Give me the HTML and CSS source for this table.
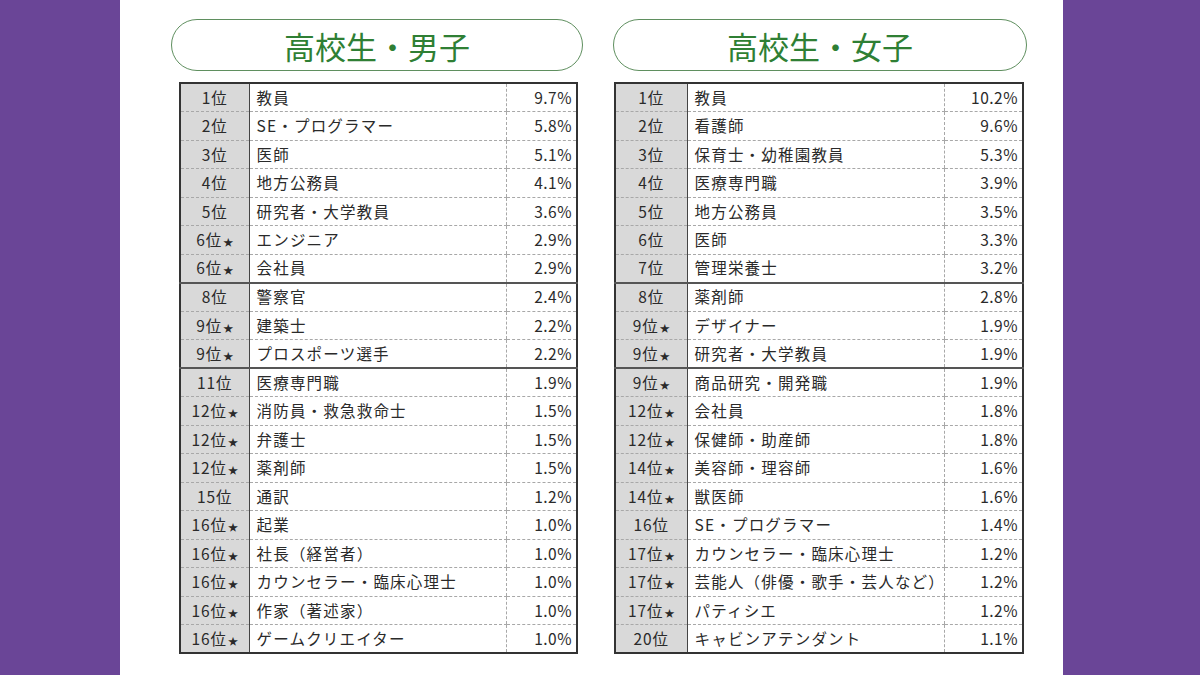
FILE: index.html
```html
<!DOCTYPE html>
<html lang="ja">
<head>
<meta charset="utf-8">
<title>高校生 なりたい職業ランキング</title>
<link rel="stylesheet" href="styles.css">
</head>
<body>
<div class="frame">
  <div class="side side-left"></div>
  <main class="sheet">
    <section class="col col-boys">
      <h2 class="pill">高校生・男子</h2>
      <table class="rank-table">
        <colgroup><col class="c-rank"><col class="c-name"><col class="c-pct"></colgroup>
        <tbody>
          <tr><td class="rank">1位</td><td class="name">教員</td><td class="pct">9.7%</td></tr>
          <tr><td class="rank">2位</td><td class="name">SE・プログラマー</td><td class="pct">5.8%</td></tr>
          <tr><td class="rank">3位</td><td class="name">医師</td><td class="pct">5.1%</td></tr>
          <tr><td class="rank">4位</td><td class="name">地方公務員</td><td class="pct">4.1%</td></tr>
          <tr><td class="rank">5位</td><td class="name">研究者・大学教員</td><td class="pct">3.6%</td></tr>
          <tr><td class="rank">6位<span class="star">★</span></td><td class="name">エンジニア</td><td class="pct">2.9%</td></tr>
          <tr class="group-end"><td class="rank">6位<span class="star">★</span></td><td class="name">会社員</td><td class="pct">2.9%</td></tr>
          <tr><td class="rank">8位</td><td class="name">警察官</td><td class="pct">2.4%</td></tr>
          <tr><td class="rank">9位<span class="star">★</span></td><td class="name">建築士</td><td class="pct">2.2%</td></tr>
          <tr class="group-end"><td class="rank">9位<span class="star">★</span></td><td class="name">プロスポーツ選手</td><td class="pct">2.2%</td></tr>
          <tr><td class="rank">11位</td><td class="name">医療専門職</td><td class="pct">1.9%</td></tr>
          <tr><td class="rank">12位<span class="star">★</span></td><td class="name">消防員・救急救命士</td><td class="pct">1.5%</td></tr>
          <tr><td class="rank">12位<span class="star">★</span></td><td class="name">弁護士</td><td class="pct">1.5%</td></tr>
          <tr><td class="rank">12位<span class="star">★</span></td><td class="name">薬剤師</td><td class="pct">1.5%</td></tr>
          <tr><td class="rank">15位</td><td class="name">通訳</td><td class="pct">1.2%</td></tr>
          <tr><td class="rank">16位<span class="star">★</span></td><td class="name">起業</td><td class="pct">1.0%</td></tr>
          <tr><td class="rank">16位<span class="star">★</span></td><td class="name">社長（経営者）</td><td class="pct">1.0%</td></tr>
          <tr><td class="rank">16位<span class="star">★</span></td><td class="name">カウンセラー・臨床心理士</td><td class="pct">1.0%</td></tr>
          <tr><td class="rank">16位<span class="star">★</span></td><td class="name">作家（著述家）</td><td class="pct">1.0%</td></tr>
          <tr><td class="rank">16位<span class="star">★</span></td><td class="name">ゲームクリエイター</td><td class="pct">1.0%</td></tr>
        </tbody>
      </table>
    </section>
    <section class="col col-girls">
      <h2 class="pill">高校生・女子</h2>
      <table class="rank-table">
        <colgroup><col class="c-rank"><col class="c-name"><col class="c-pct"></colgroup>
        <tbody>
          <tr><td class="rank">1位</td><td class="name">教員</td><td class="pct">10.2%</td></tr>
          <tr><td class="rank">2位</td><td class="name">看護師</td><td class="pct">9.6%</td></tr>
          <tr><td class="rank">3位</td><td class="name">保育士・幼稚園教員</td><td class="pct">5.3%</td></tr>
          <tr><td class="rank">4位</td><td class="name">医療専門職</td><td class="pct">3.9%</td></tr>
          <tr><td class="rank">5位</td><td class="name">地方公務員</td><td class="pct">3.5%</td></tr>
          <tr><td class="rank">6位</td><td class="name">医師</td><td class="pct">3.3%</td></tr>
          <tr class="group-end"><td class="rank">7位</td><td class="name">管理栄養士</td><td class="pct">3.2%</td></tr>
          <tr><td class="rank">8位</td><td class="name">薬剤師</td><td class="pct">2.8%</td></tr>
          <tr><td class="rank">9位<span class="star">★</span></td><td class="name">デザイナー</td><td class="pct">1.9%</td></tr>
          <tr class="group-end"><td class="rank">9位<span class="star">★</span></td><td class="name">研究者・大学教員</td><td class="pct">1.9%</td></tr>
          <tr><td class="rank">9位<span class="star">★</span></td><td class="name">商品研究・開発職</td><td class="pct">1.9%</td></tr>
          <tr><td class="rank">12位<span class="star">★</span></td><td class="name">会社員</td><td class="pct">1.8%</td></tr>
          <tr><td class="rank">12位<span class="star">★</span></td><td class="name">保健師・助産師</td><td class="pct">1.8%</td></tr>
          <tr><td class="rank">14位<span class="star">★</span></td><td class="name">美容師・理容師</td><td class="pct">1.6%</td></tr>
          <tr><td class="rank">14位<span class="star">★</span></td><td class="name">獣医師</td><td class="pct">1.6%</td></tr>
          <tr><td class="rank">16位</td><td class="name">SE・プログラマー</td><td class="pct">1.4%</td></tr>
          <tr><td class="rank">17位<span class="star">★</span></td><td class="name">カウンセラー・臨床心理士</td><td class="pct">1.2%</td></tr>
          <tr><td class="rank">17位<span class="star">★</span></td><td class="name">芸能人（俳優・歌手・芸人など）</td><td class="pct">1.2%</td></tr>
          <tr><td class="rank">17位<span class="star">★</span></td><td class="name">パティシエ</td><td class="pct">1.2%</td></tr>
          <tr><td class="rank">20位</td><td class="name">キャビンアテンダント</td><td class="pct">1.1%</td></tr>
        </tbody>
      </table>
    </section>
  </main>
  <div class="side side-right"></div>
</div>
</body>
</html>
```

FILE: styles.css
```css
html, body {
  margin: 0;
  padding: 0;
  background: #ffffff;
}

body {
  font-family: "Noto Sans CJK JP", "Noto Sans", sans-serif;
  color: #2a2a2a;
}

.frame {
  display: flex;
  width: 1200px;
  height: 675px;
  overflow: hidden;
}

.side {
  background: #6a4597;
  flex: none;
}

.side-left {
  width: 120px;
}

.side-right {
  width: 137px;
}

.sheet {
  flex: 1;
  background: #ffffff;
  display: flex;
  gap: 30px;
  padding: 19px 0 0 51px;
  box-sizing: border-box;
}

.col {
  display: flex;
  flex-direction: column;
}

.col-boys {
  width: 412px;
}

.col-girls {
  width: 414px;
}

.pill {
  margin: 0;
  height: 52px;
  box-sizing: border-box;
  border: 1.5px solid #5f8f5f;
  border-radius: 26px;
  display: flex;
  align-items: center;
  justify-content: center;
  font-size: 31px;
  font-weight: 400;
  color: #2f7f34;
  letter-spacing: 0px;
  line-height: 1;
}

.rank-table {
  margin-top: 11px;
  border-collapse: collapse;
  table-layout: fixed;
  border: 2px solid #333333;
  font-size: 15.5px;
  line-height: 1;
}

.col-boys .rank-table {
  width: 399px;
  margin-left: 8px;
}

.col-girls .rank-table {
  width: 410px;
  margin-left: 1px;
}

.col-boys .c-rank { width: 69px; }
.col-boys .c-pct { width: 71px; }
.col-girls .c-rank { width: 72px; }
.col-girls .c-pct { width: 79px; }

.rank-table td {
  height: 28.5px;
  padding: 0;
  border-bottom: 1px dashed #a8a8a8;
  box-sizing: border-box;
  white-space: nowrap;
  vertical-align: middle;
}

.rank-table tr.group-end td {
  border-bottom: 2px solid #555555;
}

.rank-table tr:last-child td {
  border-bottom: none;
}

.rank {
  background: #d9d9d9;
  text-align: center;
  border-right: 1.5px solid #444444;
  letter-spacing: 1px;
}

.star {
  font-size: 10px;
  letter-spacing: 0;
  margin-left: 1px;
}

.name {
  padding-left: 7px !important;
  letter-spacing: 1.2px;
}

.pct {
  text-align: right;
  padding-right: 4px !important;
  border-left: 1px dashed #a8a8a8;
  letter-spacing: 0.5px;
}
```
